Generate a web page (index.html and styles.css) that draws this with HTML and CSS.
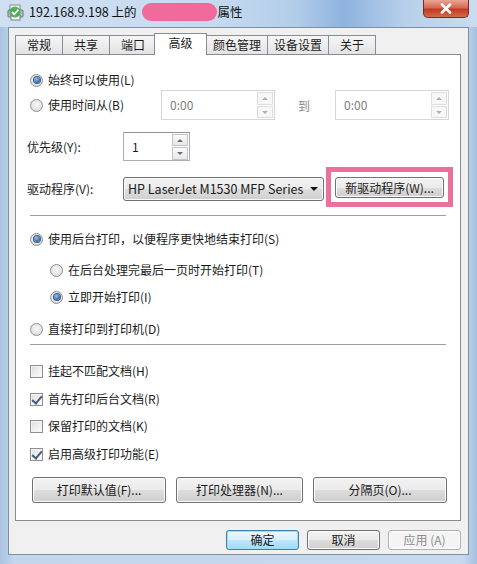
FILE: index.html
```html
<!DOCTYPE html>
<html lang="zh-CN">
<head>
<meta charset="utf-8">
<title>属性</title>
<link rel="stylesheet" href="styles.css">
</head>
<body>
<div class="window">
  <div class="titlebar">
    <svg class="ticon" width="18" height="17" viewBox="0 0 18 17">
      <rect x="3" y="1" width="10" height="6" fill="#f4f4f4" stroke="#8a8a8a"/>
      <rect x="1" y="6" width="15" height="7" rx="1" fill="#b9bcc0" stroke="#6f7377"/>
      <rect x="4" y="11" width="9" height="5" fill="#ffffff" stroke="#7b7e82"/>
      <circle cx="8" cy="8" r="5.5" fill="#3fae49" opacity="0.9"/>
      <path d="M5 8 L7.3 10.3 L11.5 5.6" fill="none" stroke="#ffffff" stroke-width="1.8"/>
    </svg>
    <span class="ttext">192.168.9.198 上的</span>
    <span class="blob"></span>
    <span class="ttext">属性</span>
    <div class="close">
      <svg width="14" height="11" viewBox="0 0 14 11">
        <path d="M3 1.5 L11 9.5 M11 1.5 L3 9.5" stroke="#ffffff" stroke-width="2.6" stroke-linecap="round"/>
      </svg>
    </div>
  </div>
  <div class="client">
    <div class="tabs">
      <div class="tab">常规</div>
      <div class="tab">共享</div>
      <div class="tab">端口</div>
      <div class="tab sel">高级</div>
      <div class="tab">颜色管理</div>
      <div class="tab">设备设置</div>
      <div class="tab">关于</div>
    </div>
    <div class="panel">
      <div class="row r1"><span class="radio on"></span><span class="lbl">始终可以使用(L)</span></div>
      <div class="row r2">
        <span class="radio"></span><span class="lbl w-from">使用时间从(B)</span>
        <div class="spin dis time"><span class="val">0:00</span><span class="arrows"><span class="up"></span><span class="dn"></span></span></div>
        <span class="to">到</span>
        <div class="spin dis time"><span class="val">0:00</span><span class="arrows"><span class="up"></span><span class="dn"></span></span></div>
      </div>
      <div class="row r3">
        <span class="plain lbl-fixed">优先级(Y):</span>
        <div class="spin prio"><span class="val">1</span><span class="arrows"><span class="up"></span><span class="dn"></span></span></div>
      </div>
      <div class="row r4">
        <span class="plain lbl-fixed">驱动程序(V):</span>
        <div class="combo"><span class="ctext">HP LaserJet M1530 MFP Series</span><span class="carrow"></span></div>
        <div class="hl"><button class="btn newdrv">新驱动程序(W)...</button></div>
      </div>
      <div class="sep s1"></div>
      <div class="row r5"><span class="radio on"></span><span class="lbl">使用后台打印，以便程序更快地结束打印(S)</span></div>
      <div class="row r6 sub"><span class="radio"></span><span class="lbl">在后台处理完最后一页时开始打印(T)</span></div>
      <div class="row r7 sub"><span class="radio on"></span><span class="lbl">立即开始打印(I)</span></div>
      <div class="row r8"><span class="radio"></span><span class="lbl">直接打印到打印机(D)</span></div>
      <div class="sep s2"></div>
      <div class="row c1"><span class="check"></span><span class="lbl">挂起不匹配文档(H)</span></div>
      <div class="row c2"><span class="check on"></span><span class="lbl">首先打印后台文档(R)</span></div>
      <div class="row c3"><span class="check"></span><span class="lbl">保留打印的文档(K)</span></div>
      <div class="row c4"><span class="check on"></span><span class="lbl">启用高级打印功能(E)</span></div>
      <div class="btnrow">
        <button class="btn wide b1">打印默认值(F)...</button>
        <button class="btn wide b2">打印处理器(N)...</button>
        <button class="btn wide b3">分隔页(O)...</button>
      </div>
    </div>
    <div class="footer">
      <button class="btn fbtn default">确定</button>
      <button class="btn fbtn">取消</button>
      <button class="btn fbtn disabled">应用 (A)</button>
    </div>
  </div>
</div>
</body>
</html>
```

FILE: styles.css
```css
* { box-sizing: border-box; }
html, body {
  margin: 0;
  padding: 0;
  width: 477px;
  height: 564px;
  overflow: hidden;
}
body {
  font-family: "Noto Sans CJK SC", "Noto Sans", sans-serif;
  font-size: 12px;
  color: #1b1b1b;
  background: linear-gradient(90deg, #a9c3e0 0%, #c3d6ec 3%, #c7d9ee 97%, #a6c0de 100%);
}
.window {
  display: flex;
  flex-direction: column;
  width: 477px;
  height: 564px;
}
.titlebar {
  height: 27px;
  display: flex;
  align-items: flex-start;
  padding-left: 7px;
  background: linear-gradient(90deg, #cfe0f2 0%, #c6daf0 45%, #b3cde9 62%, #8fb3de 72%, #b8d0eb 85%, #c9dcf0 100%);
  position: relative;
}
.ticon { margin-top: 4px; flex: none; }
.ttext {
  margin-top: 3px;
  line-height: 17px;
  font-size: 12.5px;
  color: #111;
  white-space: nowrap;
}
.titlebar .ttext:first-of-type { margin-left: 4px; }
.blob {
  width: 75px;
  height: 18px;
  margin: 3px 1px 0 5px;
  border-radius: 9px;
  background: #f06b9b;
  flex: none;
}
.close {
  margin-left: auto;
  margin-right: 8px;
  width: 46px;
  height: 18px;
  border: 1px solid #7a2a22;
  border-top: none;
  border-radius: 0 0 5px 5px;
  background: linear-gradient(#e8a693 0%, #d46a52 45%, #c2391e 55%, #d36a4c 100%);
  display: flex;
  align-items: center;
  justify-content: center;
}
.client {
  margin: 0 8px 9px 8px;
  height: 528px;
  background: #f0f0f0;
  border: 1px solid #7d8fa3;
  padding: 4px 7px 0 6px;
  display: flex;
  flex-direction: column;
}
.tabs {
  display: flex;
  align-items: flex-end;
  height: 22px;
  position: relative;
  z-index: 2;
}
.tab {
  height: 19px;
  min-width: 48px;
  padding: 0 6px;
  border: 1px solid #898c95;
  border-bottom: none;
  margin-right: -1px;
  background: linear-gradient(#f6f6f6, #e3e3e3);
  display: flex;
  align-items: center;
  justify-content: center;
  line-height: 16px;
  white-space: nowrap;
}
.tab.sel {
  height: 22px;
  min-width: 53px;
  margin: 0 -1px -1px -2px;
  background: #ffffff;
  padding-bottom: 3px;
  position: relative;
  z-index: 3;
}
.panel {
  height: 467px;
  border: 1px solid #898c95;
  background: #ffffff;
  padding: 15px 0 0 14px;
  display: flex;
  flex-direction: column;
  position: relative;
  z-index: 1;
}
.row {
  display: flex;
  align-items: center;
  height: 20px;
  white-space: nowrap;
}
.lbl { margin-left: 5px; line-height: 16px; }
.plain { line-height: 16px; }
.lbl-fixed { width: 96px; margin-left: -3px; }
.sub { padding-left: 20px; }

.r2 { height: 30px; margin-top: 0; }
.w-from { width: 113px; }
.to { width: 60px; padding-left: 23px; color: #8a8a8a; }
.r3 { height: 29px; margin-top: 12px; }
.r4 { height: 24px; margin-top: 16px; position: relative; }
.s1 { margin-top: 14px; }
.r5 { margin-top: 12px; }
.r6 { margin-top: 11px; }
.r7 { margin-top: 7px; }
.r8 { margin-top: 12px; }
.s2 { margin-top: 5px; }
.c1 { margin-top: 15px; }
.c2 { margin-top: 8px; }
.c3 { margin-top: 7px; }
.c4 { margin-top: 8px; }

.sep {
  width: 416px;
  height: 2px;
  border-top: 1px solid #a0a0a0;
  border-bottom: 1px solid #ffffff;
}

.radio {
  width: 13px;
  height: 13px;
  border-radius: 50%;
  border: 1px solid #8e8f8f;
  background: radial-gradient(circle at 50% 40%, #f7f7f7 0%, #e6e6e6 55%, #cfcfcf 100%);
  flex: none;
  display: flex;
  align-items: center;
  justify-content: center;
}
.radio.on::after {
  content: "";
  width: 6px;
  height: 6px;
  border-radius: 50%;
  background: radial-gradient(circle at 40% 35%, #9fc3e8 0%, #3f77b5 55%, #1c4f8c 100%);
  box-shadow: 0 0 0 1px #3b5e86;
}
.check {
  width: 13px;
  height: 13px;
  border: 1px solid #8e8f8f;
  background: linear-gradient(135deg, #dcdcdc 0%, #f2f2f2 60%, #fdfdfd 100%);
  box-shadow: inset 0 0 0 1px #f4f4f4;
  flex: none;
  position: relative;
}
.check.on::after {
  content: "";
  position: absolute;
  left: 3px;
  top: 0px;
  width: 4px;
  height: 8px;
  border-right: 2px solid #4a5a80;
  border-bottom: 2px solid #4a5a80;
  transform: rotate(40deg);
}

.spin {
  height: 100%;
  border: 1px solid #abadb3;
  border-top-color: #8f9299;
  background: #ffffff;
  display: flex;
  align-items: center;
  padding: 0 1px 0 8px;
}
.spin.dis { border-color: #d6d6d6; }
.spin.dis .val { color: #808080; }
.spin.time { width: 114px; }
.spin.prio { width: 67px; }
.val { flex: 1; line-height: 16px; }
.arrows {
  display: flex;
  flex-direction: column;
  width: 16px;
  height: 26px;
  gap: 1px;
}
.up, .dn {
  flex: 1;
  border: 1px solid #c2c4c8;
  background: linear-gradient(#fafafa, #e8e8e8);
  position: relative;
}
.dis .up, .dis .dn { border-color: #dedede; background: #f7f7f7; }
.up::after, .dn::after {
  content: "";
  position: absolute;
  left: 4px;
  top: 4px;
  border-left: 3px solid transparent;
  border-right: 3px solid transparent;
}
.up::after { border-bottom: 3px solid #6c6c6c; }
.dn::after { border-top: 3px solid #6c6c6c; }
.dis .up::after { border-bottom-color: #b0b0b0; }
.dis .dn::after { border-top-color: #b0b0b0; }

.combo {
  width: 201px;
  height: 24px;
  border: 1px solid #707070;
  border-radius: 3px;
  background: linear-gradient(#f2f2f2 0%, #ebebeb 50%, #dddddd 51%, #cfcfcf 100%);
  box-shadow: inset 0 0 0 1px #fbfbfb;
  display: flex;
  align-items: center;
  padding: 0 5px 0 4px;
}
.ctext {
  flex: 1;
  white-space: nowrap;
  line-height: 16px;
  font-size: 12.5px;
}
.carrow {
  margin-left: 4px;
  border-left: 4px solid transparent;
  border-right: 4px solid transparent;
  border-top: 4px solid #111;
}
.hl {
  position: absolute;
  left: 296px;
  top: -10px;
  width: 127px;
  height: 40px;
  border: 5px solid #ea719b;
  padding: 5px 0 0 4px;
}
.btn {
  font-family: inherit;
  font-size: 12px;
  color: #1b1b1b;
  border: 1px solid #707070;
  border-radius: 3px;
  background: linear-gradient(#f2f2f2 0%, #ebebeb 50%, #dddddd 51%, #cfcfcf 100%);
  box-shadow: inset 0 0 0 1px #fcfcfc;
  padding: 0;
  line-height: 16px;
  white-space: nowrap;
}
.newdrv { width: 109px; height: 21px; }
.btnrow {
  display: flex;
  gap: 10px;
  margin-top: 13px;
  padding-left: 2px;
}
.wide { height: 26px; }
.b1 { width: 134px; }
.b2 { width: 127px; }
.b3 { width: 134px; }
.footer {
  display: flex;
  justify-content: flex-end;
  gap: 8px;
  margin-top: 9px;
}
.fbtn { width: 73px; height: 20px; }
.default {
  border-color: #3c7fb1;
  box-shadow: inset 0 0 0 1px #9fdcf6;
  background: linear-gradient(#eaf6fd 0%, #d9f0fc 50%, #bee6fd 51%, #a7d9f5 100%);
}
.disabled {
  border-color: #adb2b5;
  background: #f4f4f4;
  color: #8d8d8d;
}
```
